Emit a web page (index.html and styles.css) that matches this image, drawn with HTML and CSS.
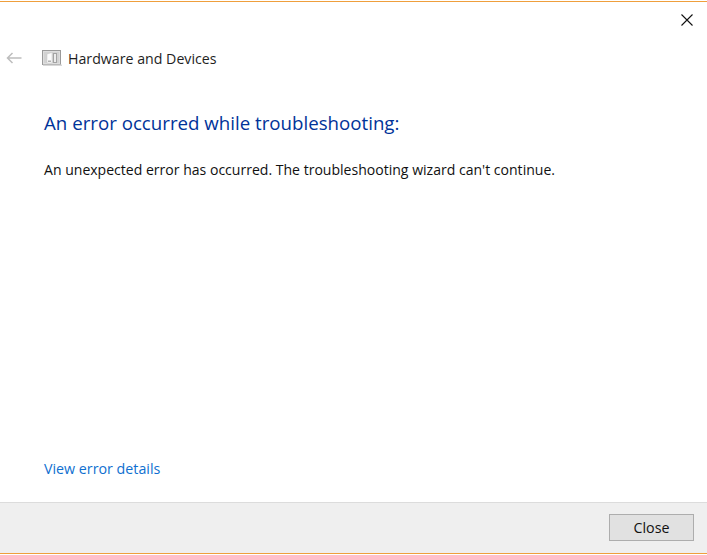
FILE: index.html
```html
<!DOCTYPE html>
<html lang="en">
<head>
<meta charset="utf-8">
<title>Hardware and Devices</title>
<link rel="stylesheet" href="styles.css">
</head>
<body>
<div class="window">
  <div class="titlebar">
    <svg class="close-x" width="14" height="14" viewBox="0 0 14 14"><path d="M1.5 1.5L12.5 12.5M12.5 1.5L1.5 12.5" stroke="#111" stroke-width="1.1" fill="none"/></svg>
  </div>
  <div class="nav">
    <svg class="back" width="16" height="12" viewBox="0 0 16 12"><path d="M15.5 6H1.5M6.5 1L1.5 6L6.5 11" stroke="#bdbdbd" stroke-width="1.5" fill="none"/></svg>
    <svg class="icon" width="20" height="16" viewBox="0 0 20 16">
      <rect x="0.5" y="0.5" width="18" height="14" fill="#dedede" stroke="#9a9a9a"/>
      <rect x="1" y="14.5" width="19" height="1.5" fill="#d8d8d8"/>
      <rect x="2" y="2" width="15" height="11" fill="#d2d2d2"/>
      <path d="M5 4L10 2.5V13H5Z" fill="#fbfbfb" stroke="#c4c4c4" stroke-width="0.5"/>
      <rect x="11" y="3" width="4" height="10" fill="#a3a3a3"/>
      <rect x="12" y="4" width="2" height="8" fill="#ececec"/>
      <rect x="6" y="10.5" width="3" height="1.5" fill="#b0b0b0"/>
    </svg>
    <span class="nav-title">Hardware and Devices</span>
  </div>
  <main class="content">
    <h1 class="heading">An error occurred while troubleshooting:</h1>
    <p class="message">An unexpected error has occurred. The troubleshooting wizard can't continue.</p>
    <a class="details" href="#">View error details</a>
  </main>
  <footer class="footer">
    <button class="btn" type="button">Close</button>
  </footer>
</div>
</body>
</html>
```
FILE: styles.css
```css
* { box-sizing: border-box; }
html, body { margin: 0; height: 100%; background: #fff; }
body { font-family: "Open Sans", "Noto Sans", sans-serif; color: #1a1a1a; overflow: hidden; }
.window {
  display: flex;
  flex-direction: column;
  border-top: 1px solid #ef9f3c;
  border-bottom: 1px solid #ef9f3c;
  margin-top: 1px;
  height: 553px;
}
.titlebar { height: 38px; flex: none; display: flex; justify-content: flex-end; padding: 11px 13px 0 0; }
.close-x { display: block; }
.nav { height: 24px; flex: none; display: flex; align-items: center; padding-left: 6px; margin-top: 6px; }
.back { flex: none; }
.icon { margin-left: 20px; flex: none; }
.nav-title { margin-left: 6px; font-size: 14.2px; color: #1e1e1e; }
.content { flex: 1; display: flex; flex-direction: column; padding: 0 44px; min-height: 0; }
.heading { margin: 40px 0 0; font-size: 18.7px; font-weight: 400; line-height: 26px; color: #003399; }
.message { margin: 24px 0 0; font-size: 14.06px; line-height: 20px; color: #111; }
.details { margin-top: auto; margin-bottom: 23px; font-size: 14.25px; line-height: 20px; color: #0f6fd0; text-decoration: none; }
.footer { height: 51px; flex: none; background: #efefef; border-top: 1px solid #dcdcdc; display: flex; justify-content: flex-end; align-items: flex-start; padding: 11px 13px 0 0; }
.btn { width: 85px; height: 27px; background: #e1e1e1; border: 1px solid #adadad; font: inherit; font-size: 14.3px; color: #111; padding: 0; }
```
